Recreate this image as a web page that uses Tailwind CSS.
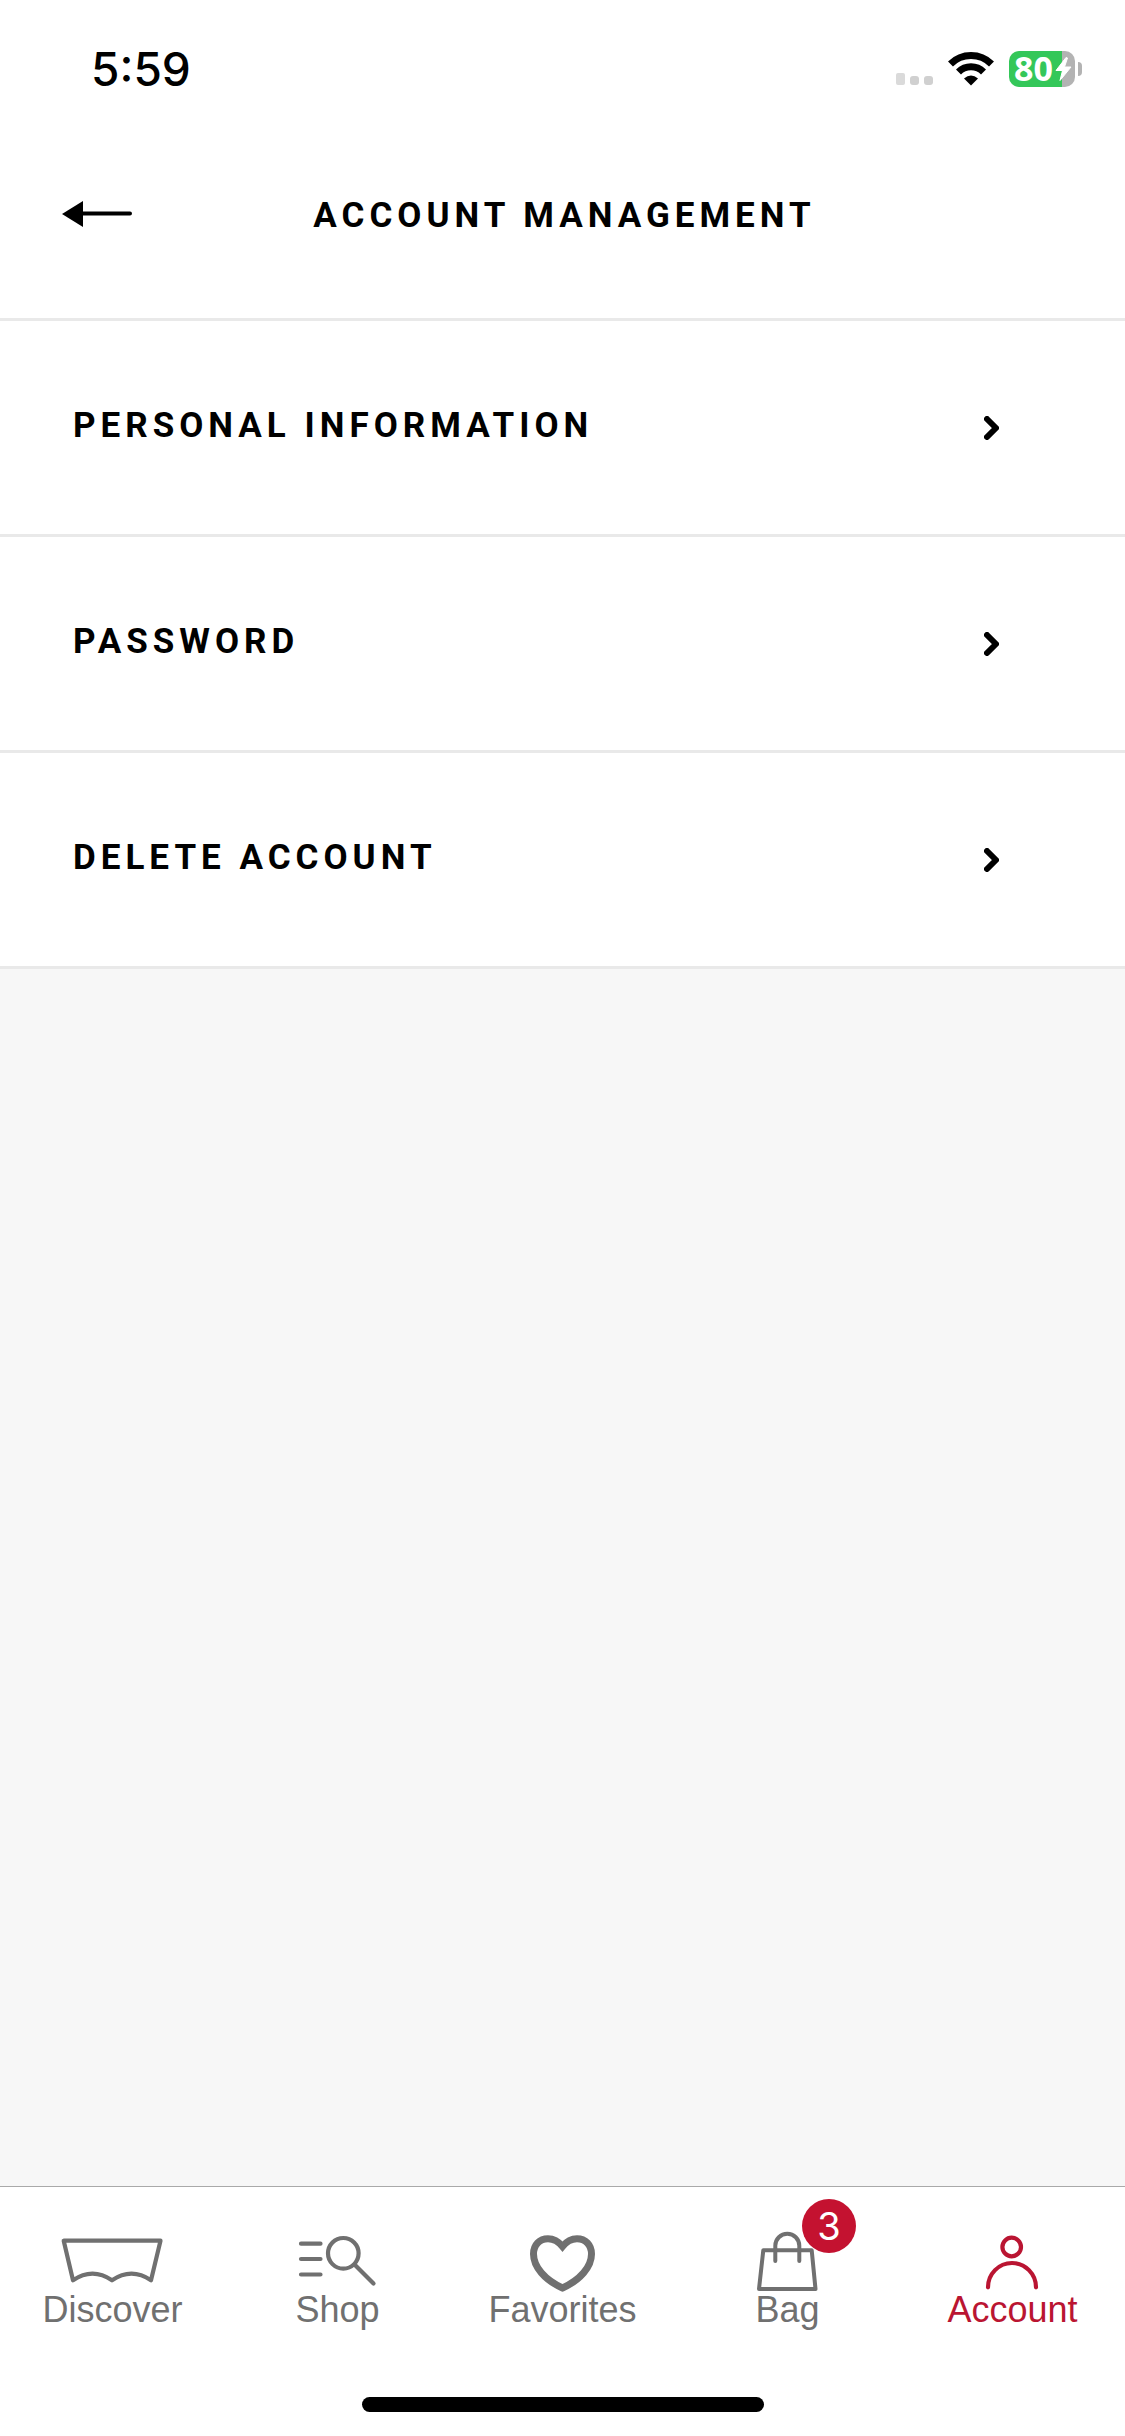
<!DOCTYPE html>
<html lang="en">

<head>
    <meta charset="UTF-8">
    <meta name="viewport" content="width=device-width, initial-scale=1.0">
    <title>Account Management</title>
    <script src="https://cdn.jsdelivr.net/npm/@tailwindcss/browser@4"></script>
</head>

<body class="min-h-screen flex flex-col bg-[#f7f7f7] text-black font-['Roboto',sans-serif]">

    <!-- Status bar -->
    <div class="h-[132px] pt-[6px] pl-[91px] pr-[43px] flex items-center justify-between bg-white">
        <span class="text-[46px] leading-none font-medium font-['Inter',sans-serif]">5:59</span>
        <div class="flex items-center gap-[15px]">
            <svg class="w-[37px] h-9" viewBox="0 0 37 36" fill="#d0d0d0">
                <rect x="0" y="22" width="9" height="12" rx="2" fill="#dadada" />
                <rect x="14" y="25" width="9" height="9" rx="3" />
                <rect x="28" y="25" width="9" height="9" rx="3" />
            </svg>
            <svg class="w-[46px] h-9" viewBox="0 0 46 36">
                <g fill="none" stroke="#000" stroke-width="7">
                    <path d="M2.5 13A29 29 0 0 1 43.500 13" />
                    <path d="M10.500 21A17.500 17.500 0 0 1 35.500 21" />
                </g>
                <path d="M23 34.500L16 27.500Q23 21.500 30 27.500Z" />
            </svg>
            <div class="flex items-center">
                <div class="w-[66px] h-9 pl-[5px] flex items-center rounded-[10px] bg-linear-to-r from-[#34c759] from-80% to-[#b3b3b3] to-80%">
                    <span class="text-[34px] leading-[34px] pb-[2px] font-bold text-white font-['Open_Sans',sans-serif]">80</span>
                    <svg class="w-[17px] h-6 shrink-0 ml-[2px]" viewBox="0 0 17 24" fill="#fff">
                        <path d="M11 .5L1 13.500H7.500L5 23.500L16 10H9.500L12.500 1Z" stroke="#fff" stroke-linejoin="round" />
                    </svg>
                </div>
                <div class="ml-[3px] w-1 h-[14px] rounded-r-full bg-[#b3b3b3]"></div>
            </div>
        </div>
    </div>

    <!-- Header -->
    <header class="h-[189px] pb-[18px] grid grid-cols-[200px_1fr_200px] items-center bg-white border-b-3 border-[#e9e9e9]">
        <button type="button" aria-label="Back" class="pl-[62px] pb-1">
            <svg class="w-[70px] h-[26px]" viewBox="0 0 70 26">
                <path d="M0 13L21 0V26Z" />
                <path d="M19 12.500H68" stroke="#000" stroke-width="4" stroke-linecap="round" />
            </svg>
        </button>
        <h1 class="pl-1 text-center text-[35px] leading-10 font-bold tracking-[5px]">ACCOUNT MANAGEMENT</h1>
    </header>

    <!-- Menu -->
    <main class="grow">
        <ul class="bg-white text-[35px] leading-10 font-bold tracking-[5px]">
            <li class="border-b-3 border-[#e9e9e9]">
                <a href="#" class="h-[213px] pl-[73px] pr-[126px] flex items-center justify-between">
                    <span class="pb-1">PERSONAL INFORMATION</span>
                    <svg class="w-[15px] h-6" viewBox="0 0 15 24" fill="none" stroke="#000" stroke-width="6" stroke-linecap="round" stroke-linejoin="round"><path d="M3 3L12 12L3 21" /></svg>
                </a>
            </li>
            <li class="border-b-3 border-[#e9e9e9]">
                <a href="#" class="h-[213px] pl-[73px] pr-[126px] flex items-center justify-between">
                    <span class="pb-1">PASSWORD</span>
                    <svg class="w-[15px] h-6" viewBox="0 0 15 24" fill="none" stroke="#000" stroke-width="6" stroke-linecap="round" stroke-linejoin="round"><path d="M3 3L12 12L3 21" /></svg>
                </a>
            </li>
            <li class="border-b-3 border-[#e9e9e9]">
                <a href="#" class="h-[213px] pl-[73px] pr-[126px] flex items-center justify-between">
                    <span class="pb-1">DELETE ACCOUNT</span>
                    <svg class="w-[15px] h-6" viewBox="0 0 15 24" fill="none" stroke="#000" stroke-width="6" stroke-linecap="round" stroke-linejoin="round"><path d="M3 3L12 12L3 21" /></svg>
                </a>
            </li>
        </ul>
    </main>

    <!-- Tab bar -->
    <footer class="bg-white border-t border-[#a9a9a9]">
        <nav class="pt-11 grid grid-cols-5 text-[36px] leading-[38px] text-[#707070] font-['Liberation_Sans',Arial,sans-serif]">
            <a href="#" class="flex flex-col items-center">
                <svg class="w-[121px] h-15 overflow-visible" viewBox="0 0 121 60" fill="none" stroke="currentColor" stroke-width="4.200" stroke-linejoin="round">
                    <path d="M11.700 9.700H108.500L99 49.300Q79.500 36 60 49.300Q40.500 36 21 49.300Z" />
                </svg>
                Discover
            </a>
            <a href="#" class="flex flex-col items-center">
                <svg class="w-[121px] h-15 overflow-visible" viewBox="0 0 121 60" fill="none" stroke="currentColor" stroke-width="4.200" stroke-linecap="round">
                    <path d="M24 12.700H43.500M24 28H43.500M24 43.500H43.500" />
                    <circle cx="66.300" cy="22.300" r="15.300" />
                    <path d="M78 34L96.500 52.500" />
                </svg>
                Shop
            </a>
            <a href="#" class="flex flex-col items-center">
                <svg class="w-[121px] h-15 overflow-visible" viewBox="0 0 121 60" fill="none" stroke="currentColor" stroke-width="7">
                    <path d="M60.500 15.500C56 10 51 7.800 46 7.800C37.500 7.800 31.500 14 31.500 23C31.500 36 43 49 60.500 57C78 49 89.500 36 89.500 23C89.500 14 83.500 7.800 75 7.800C70 7.800 65 10 60.500 15.500Z" />
                </svg>
                Favorites
            </a>
            <a href="#" class="flex flex-col items-center">
                <div class="relative">
                    <svg class="w-[121px] h-15 overflow-visible" viewBox="0 0 121 60" fill="none" stroke="currentColor" stroke-width="4" stroke-linecap="round" stroke-linejoin="round">
                        <path d="M36.300 19.300H84.700L88.500 58H32Z" />
                        <path d="M48.300 30V14.700A12 12 0 0 1 72.300 14.700V30" />
                    </svg>
                    <span class="absolute left-[75px] -top-8 size-[54px] flex items-center justify-center rounded-full bg-[#c41230] text-white text-[38px] leading-none font-['Inter',sans-serif]">3</span>
                </div>
                Bag
            </a>
            <a href="#" aria-current="page" class="flex flex-col items-center text-[#ba1532]">
                <svg class="w-[121px] h-15 overflow-visible" viewBox="0 0 121 60" fill="none" stroke="currentColor" stroke-width="4.200" stroke-linecap="round">
                    <circle cx="59.700" cy="16" r="9.300" />
                    <path d="M36 56.300A24 24.300 0 0 1 84 56.300" />
                </svg>
                Account
            </a>
        </nav>
        <div class="mt-[68px] mb-6 mx-auto w-[402px] h-[15px] rounded-full bg-black"></div>
    </footer>

</body>
</html>
